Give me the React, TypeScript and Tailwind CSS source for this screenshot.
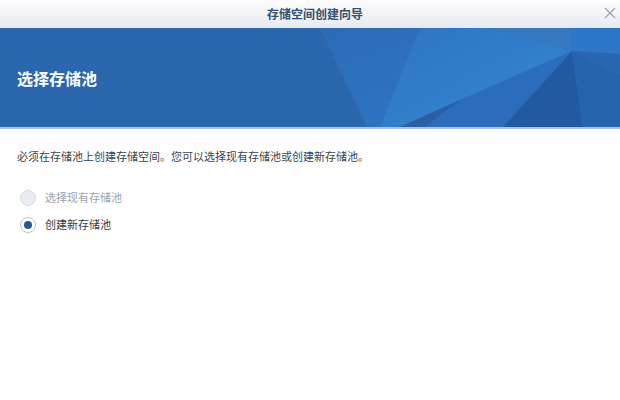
import React from "react";

const font = { fontFamily: '"Noto Sans CJK SC", "Noto Sans", sans-serif' };

function Facets() {
  return (
    <svg className="absolute inset-0 h-full w-full" viewBox="0 0 620 99" preserveAspectRatio="none">
      <defs>
        <linearGradient id="g1" x1="0" y1="0" x2="1" y2="1">
          <stop offset="0" stopColor="#2c6cb7" />
          <stop offset="1" stopColor="#2f78c6" />
        </linearGradient>
        <linearGradient id="g2" x1="0" y1="0" x2="1" y2="1">
          <stop offset="0" stopColor="#2e74c1" />
          <stop offset="1" stopColor="#3587d4" />
        </linearGradient>
      </defs>
      <polygon points="320,0 620,0 620,99 367,99" fill="url(#g1)" />
      <polygon points="420,0 490,0 572,23 460,72 400,99 380,99" fill="url(#g2)" />
      <polygon points="490,0 570,0 572,23" fill="#3679c0" />
      <polygon points="570,0 620,0 620,26 572,23" fill="#2d77c6" />
      <polygon points="572,23 620,26 620,47" fill="#2967b1" />
      <polygon points="460,72 572,23 503,99 400,99" fill="#2b6dba" />
      <polygon points="572,23 503,99 583,99" fill="#2259a3" />
      <polygon points="572,23 620,47 620,99 583,99" fill="#2663ad" />
      <polygon points="460,72 400,99 425,99" fill="#285fa6" />
    </svg>
  );
}

export default function App() {
  return (
    <div className="h-[400px] w-[620px] overflow-hidden bg-white" style={font}>
      <div className="relative flex h-[28px] items-center justify-center bg-gradient-to-b from-[#fdfdfe] to-[#e6eaef] pl-[10px]">
        <span className="text-[12px] font-bold text-[#35506f]">存储空间创建向导</span>
        <svg className="absolute right-[4px] top-[7px]" width="12" height="12" viewBox="0 0 12 12">
          <path d="M1 1 L11 11 M11 1 L1 11" stroke="#9ca5b0" strokeWidth="1.3" fill="none" />
        </svg>
      </div>
      <div className="relative flex h-[101px] items-center border-b-2 border-[#a4c6e8] bg-[#2b67ad] pl-[17px]">
        <Facets />
        <span className="relative text-[16px] font-bold text-white">选择存储池</span>
      </div>
      <div className="px-[17px] pt-[19px]">
        <p className="text-[11px] leading-[16px] text-[#3a4450]">
          必须在存储池上创建存储空间。您可以选择现有存储池或创建新存储池。
        </p>
        <div className="mt-[20px] flex flex-col">
          <div className="flex h-[27px] items-center">
            <span className="ml-[3px] h-[16px] w-[16px] rounded-full border border-[#d5dbe2] bg-[#e9edf1]" />
            <span className="ml-[9px] text-[11px] text-[#9aa3ad]">选择现有存储池</span>
          </div>
          <div className="flex h-[27px] items-center">
            <span className="ml-[3px] flex h-[16px] w-[16px] items-center justify-center rounded-full border border-[#b9c3cf] bg-white">
              <span className="h-[8px] w-[8px] rounded-full bg-[#27599a]" />
            </span>
            <span className="ml-[9px] text-[11px] text-[#333c46]">创建新存储池</span>
          </div>
        </div>
      </div>
    </div>
  );
}
